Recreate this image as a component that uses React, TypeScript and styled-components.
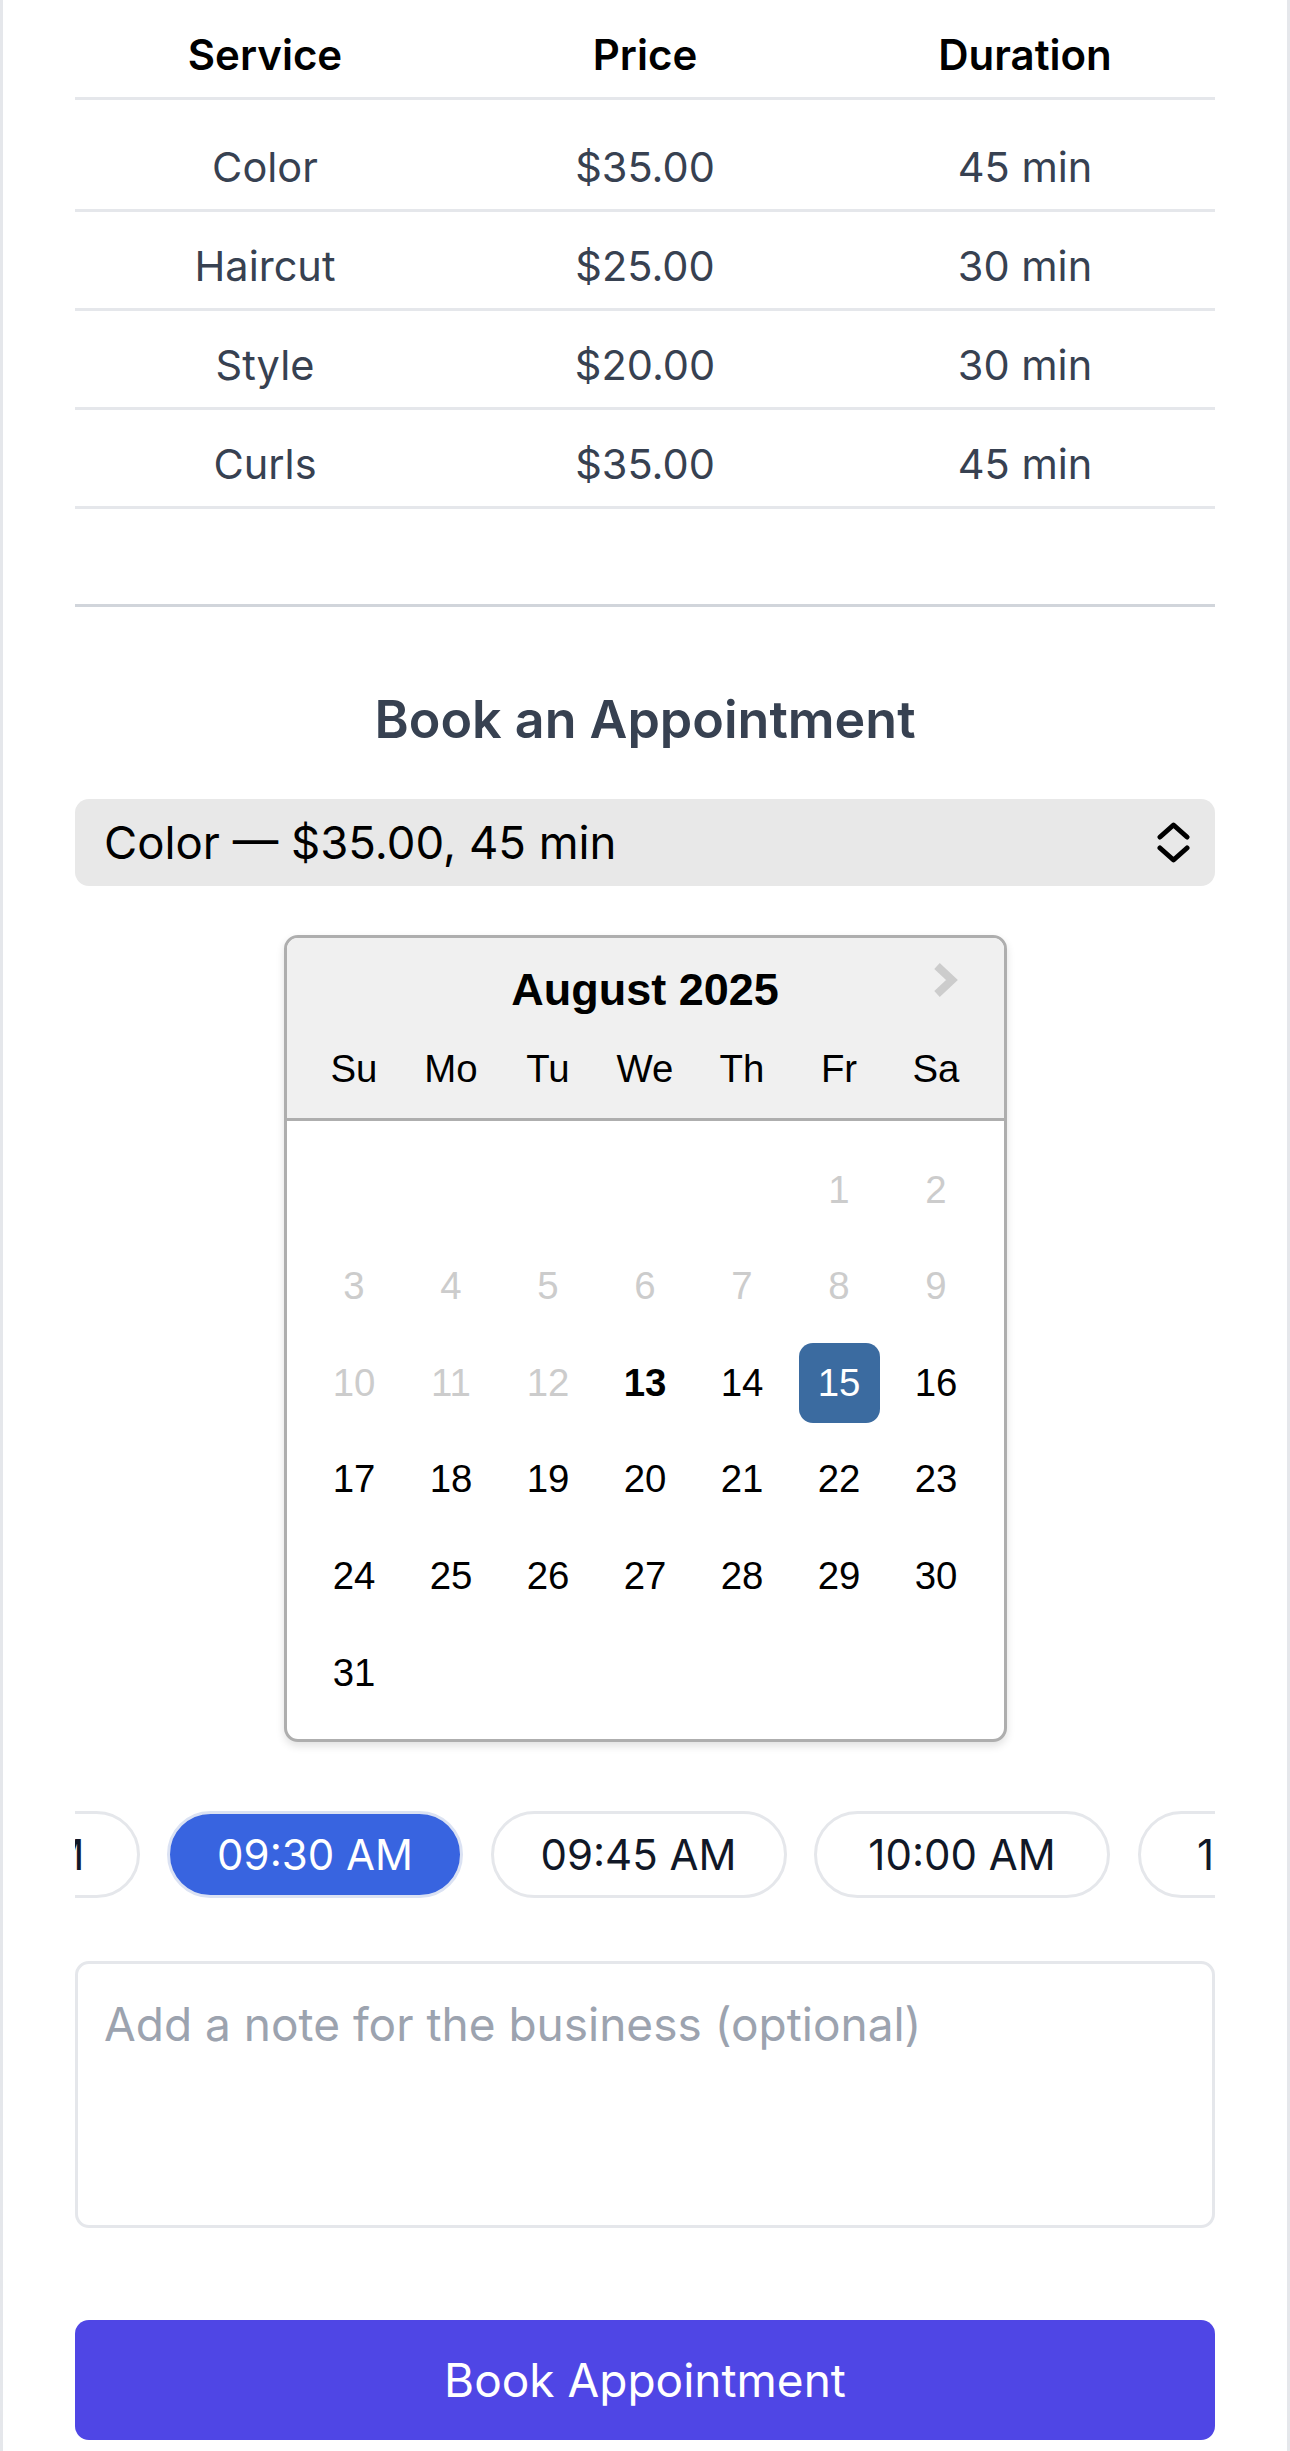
import React, { useLayoutEffect, useRef } from "react";
import styled, { createGlobalStyle } from "styled-components";

const GlobalStyle = createGlobalStyle`
  html, body { margin: 0; padding: 0; background: #ffffff; }
  * { box-sizing: border-box; }
`;

const SANS = `Inter, "Noto Sans", "Liberation Sans", sans-serif`;
const HELV = `"Liberation Sans", Arial, Helvetica, sans-serif`;

const Page = styled.div`
  width: 1290px;
  min-height: 2451px;
  border-left: 3px solid #e5e7eb;
  border-right: 3px solid #e5e7eb;
  padding: 0 72px 12px;
  background: #fff;
  display: flex;
  flex-direction: column;
  font-family: ${SANS};
`;

const Table = styled.table`
  width: 100%;
  border-collapse: collapse;
  font-family: ${SANS};
`;

const Th = styled.th`
  width: 33.333%;
  padding: 30px 0 17px;
  font-size: 42px;
  line-height: 50px;
  font-weight: 600;
  color: #000;
  text-align: center;
  border-bottom: 3px solid #e5e7eb;
`;

const Td = styled.td<{ $first?: boolean }>`
  padding: ${(p) => (p.$first ? "42px 0 17px" : "29px 0 17px")};
  font-size: 41.5px;
  line-height: 50px;
  font-weight: 400;
  color: #374151;
  text-align: center;
  border-bottom: 3px solid #e5e7eb;
`;

const Divider = styled.hr`
  margin: 95px 0 0;
  border: none;
  height: 3px;
  background: #d1d5db;
`;

const Heading = styled.h2`
  margin: 83px 0 0;
  font-size: 52px;
  line-height: 60px;
  font-weight: 600;
  color: #374151;
  text-align: center;
`;

const SelectWrap = styled.div`
  position: relative;
  margin-top: 49px;
  height: 87px;
`;

const Select = styled.select`
  appearance: none;
  -webkit-appearance: none;
  width: 100%;
  height: 100%;
  border: none;
  border-radius: 14px;
  background: #e8e8e8;
  padding: 0 80px 0 29px;
  font-family: ${SANS};
  font-size: 45.5px;
  color: #000;
  outline: none;
`;

const SelectIcon = styled.svg`
  position: absolute;
  right: 23px;
  top: 23px;
  pointer-events: none;
`;

const Calendar = styled.div`
  position: relative;
  align-self: center;
  margin-top: 49px;
  border: 3px solid #aeaeae;
  border-radius: 14px;
  background: #fff;
  font-family: ${HELV};
  color: #000;
  box-shadow: 0 4px 8px rgba(0, 0, 0, 0.12);
`;

const CalHeader = styled.div`
  background: #f0f0f0;
  border-bottom: 3px solid #aeaeae;
  border-radius: 11px 11px 0 0;
  padding: 26px 19px 0;
  text-align: center;
`;

const MonthTitle = styled.div`
  font-size: 45px;
  line-height: 52px;
  font-weight: 700;
  margin-bottom: 5px;
`;

const NextButton = styled.svg`
  position: absolute;
  right: 43px;
  top: 22px;
`;

const Week = styled.div`
  display: flex;
`;

const Cell = styled.div<{ $variant?: "name" | "muted" | "normal" | "today" | "selected" | "empty" }>`
  width: 81px;
  height: 80.6px;
  margin: 8px;
  line-height: 80.6px;
  text-align: center;
  font-size: 38.4px;
  border-radius: 14px;
  font-weight: ${(p) => (p.$variant === "today" ? 700 : 400)};
  color: ${(p) =>
    p.$variant === "muted" ? "#cccccc" : p.$variant === "selected" ? "#ffffff" : "#000000"};
  background: ${(p) => (p.$variant === "selected" ? "#3b6ba0" : "transparent")};
`;

const Month = styled.div`
  padding: 21px 19px 18px;
`;

const SlotScroller = styled.div`
  margin-top: 69px;
  overflow-x: auto;
  scrollbar-width: none;
  &::-webkit-scrollbar { display: none; }
`;

const SlotRow = styled.div`
  display: flex;
  gap: 27.5px;
  width: max-content;
`;

const Slot = styled.button<{ $active?: boolean }>`
  flex: none;
  width: 296px;
  height: 87px;
  border-radius: 999px;
  border: 3px solid ${(p) => (p.$active ? "#dbe2f3" : "#e5e7eb")};
  background: ${(p) => (p.$active ? "#3864e0" : "#ffffff")};
  color: ${(p) => (p.$active ? "#ffffff" : "#111827")};
  font-family: ${SANS};
  font-size: 42px;
  padding: 0;
  display: flex;
  align-items: center;
  justify-content: center;
`;

const Note = styled.textarea`
  margin-top: 63px;
  height: 267px;
  width: 100%;
  resize: none;
  border: 3px solid #e5e7eb;
  border-radius: 14px;
  padding: 24px 26px;
  font-family: ${SANS};
  font-size: 46px;
  line-height: 72px;
  color: #111827;
  outline: none;
  &::placeholder { color: #9ca3af; }
`;

const BookButton = styled.button`
  margin-top: 92px;
  height: 120px;
  width: 100%;
  border: none;
  border-radius: 14px;
  background: #4f46e5;
  color: #fff;
  font-family: ${SANS};
  font-size: 46px;
  font-weight: 400;
`;

const services = [
  { name: "Color", price: "$35.00", dur: "45 min" },
  { name: "Haircut", price: "$25.00", dur: "30 min" },
  { name: "Style", price: "$20.00", dur: "30 min" },
  { name: "Curls", price: "$35.00", dur: "45 min" },
];

const dayNames = ["Su", "Mo", "Tu", "We", "Th", "Fr", "Sa"];

function buildWeeks() {
  const cells: (number | null)[] = [null, null, null, null, null];
  for (let d = 1; d <= 31; d++) cells.push(d);
  const weeks: (number | null)[][] = [];
  for (let i = 0; i < cells.length; i += 7) weeks.push(cells.slice(i, i + 7));
  return weeks;
}

const slots = ["09:00 AM", "09:15 AM", "09:30 AM", "09:45 AM", "10:00 AM", "10:15 AM", "10:30 AM", "10:45 AM"];

export default function App() {
  const scroller = useRef<HTMLDivElement>(null);
  useLayoutEffect(() => {
    if (scroller.current) scroller.current.scrollLeft = 555;
  }, []);
  const weeks = buildWeeks();

  const variantFor = (d: number | null) => {
    if (d === null) return "empty" as const;
    if (d < 13) return "muted" as const;
    if (d === 13) return "today" as const;
    if (d === 15) return "selected" as const;
    return "normal" as const;
  };

  return (
    <>
      <GlobalStyle />
      <Page>
        <Table>
          <thead>
            <tr>
              <Th>Service</Th>
              <Th>Price</Th>
              <Th>Duration</Th>
            </tr>
          </thead>
          <tbody>
            {services.map((s, i) => (
              <tr key={s.name}>
                <Td $first={i === 0}>{s.name}</Td>
                <Td $first={i === 0}>{s.price}</Td>
                <Td $first={i === 0}>{s.dur}</Td>
              </tr>
            ))}
          </tbody>
        </Table>

        <Divider />
        <Heading>Book an Appointment</Heading>

        <SelectWrap>
          <Select defaultValue="color">
            <option value="color">Color — $35.00, 45 min</option>
            <option value="haircut">Haircut — $25.00, 30 min</option>
            <option value="style">Style — $20.00, 30 min</option>
            <option value="curls">Curls — $35.00, 45 min</option>
          </Select>
          <SelectIcon width="37" height="41" viewBox="0 0 37 41" fill="none">
            <polyline points="5,15 18.5,3 32,15" stroke="#000" strokeWidth="5" strokeLinecap="round" strokeLinejoin="round" />
            <polyline points="5,26 18.5,38 32,26" stroke="#000" strokeWidth="5" strokeLinecap="round" strokeLinejoin="round" />
          </SelectIcon>
        </SelectWrap>

        <Calendar>
          <CalHeader>
            <MonthTitle>August 2025</MonthTitle>
            <Week>
              {dayNames.map((n) => (
                <Cell key={n} $variant="name">{n}</Cell>
              ))}
            </Week>
          </CalHeader>
          <NextButton width="32" height="40" viewBox="0 0 32 40" fill="none">
            <polyline points="8,6 23,20 8,34" stroke="#cccccc" strokeWidth="8" strokeLinejoin="miter" />
          </NextButton>
          <Month>
            {weeks.map((w, wi) => (
              <Week key={wi}>
                {w.map((d, di) => (
                  <Cell key={di} $variant={variantFor(d)}>
                    {d ?? ""}
                  </Cell>
                ))}
              </Week>
            ))}
          </Month>
        </Calendar>

        <SlotScroller ref={scroller}>
          <SlotRow>
            {slots.map((t) => (
              <Slot key={t} $active={t === "09:30 AM"}>
                {t}
              </Slot>
            ))}
          </SlotRow>
        </SlotScroller>

        <Note placeholder="Add a note for the business (optional)" />

        <BookButton>Book Appointment</BookButton>
      </Page>
    </>
  );
}
